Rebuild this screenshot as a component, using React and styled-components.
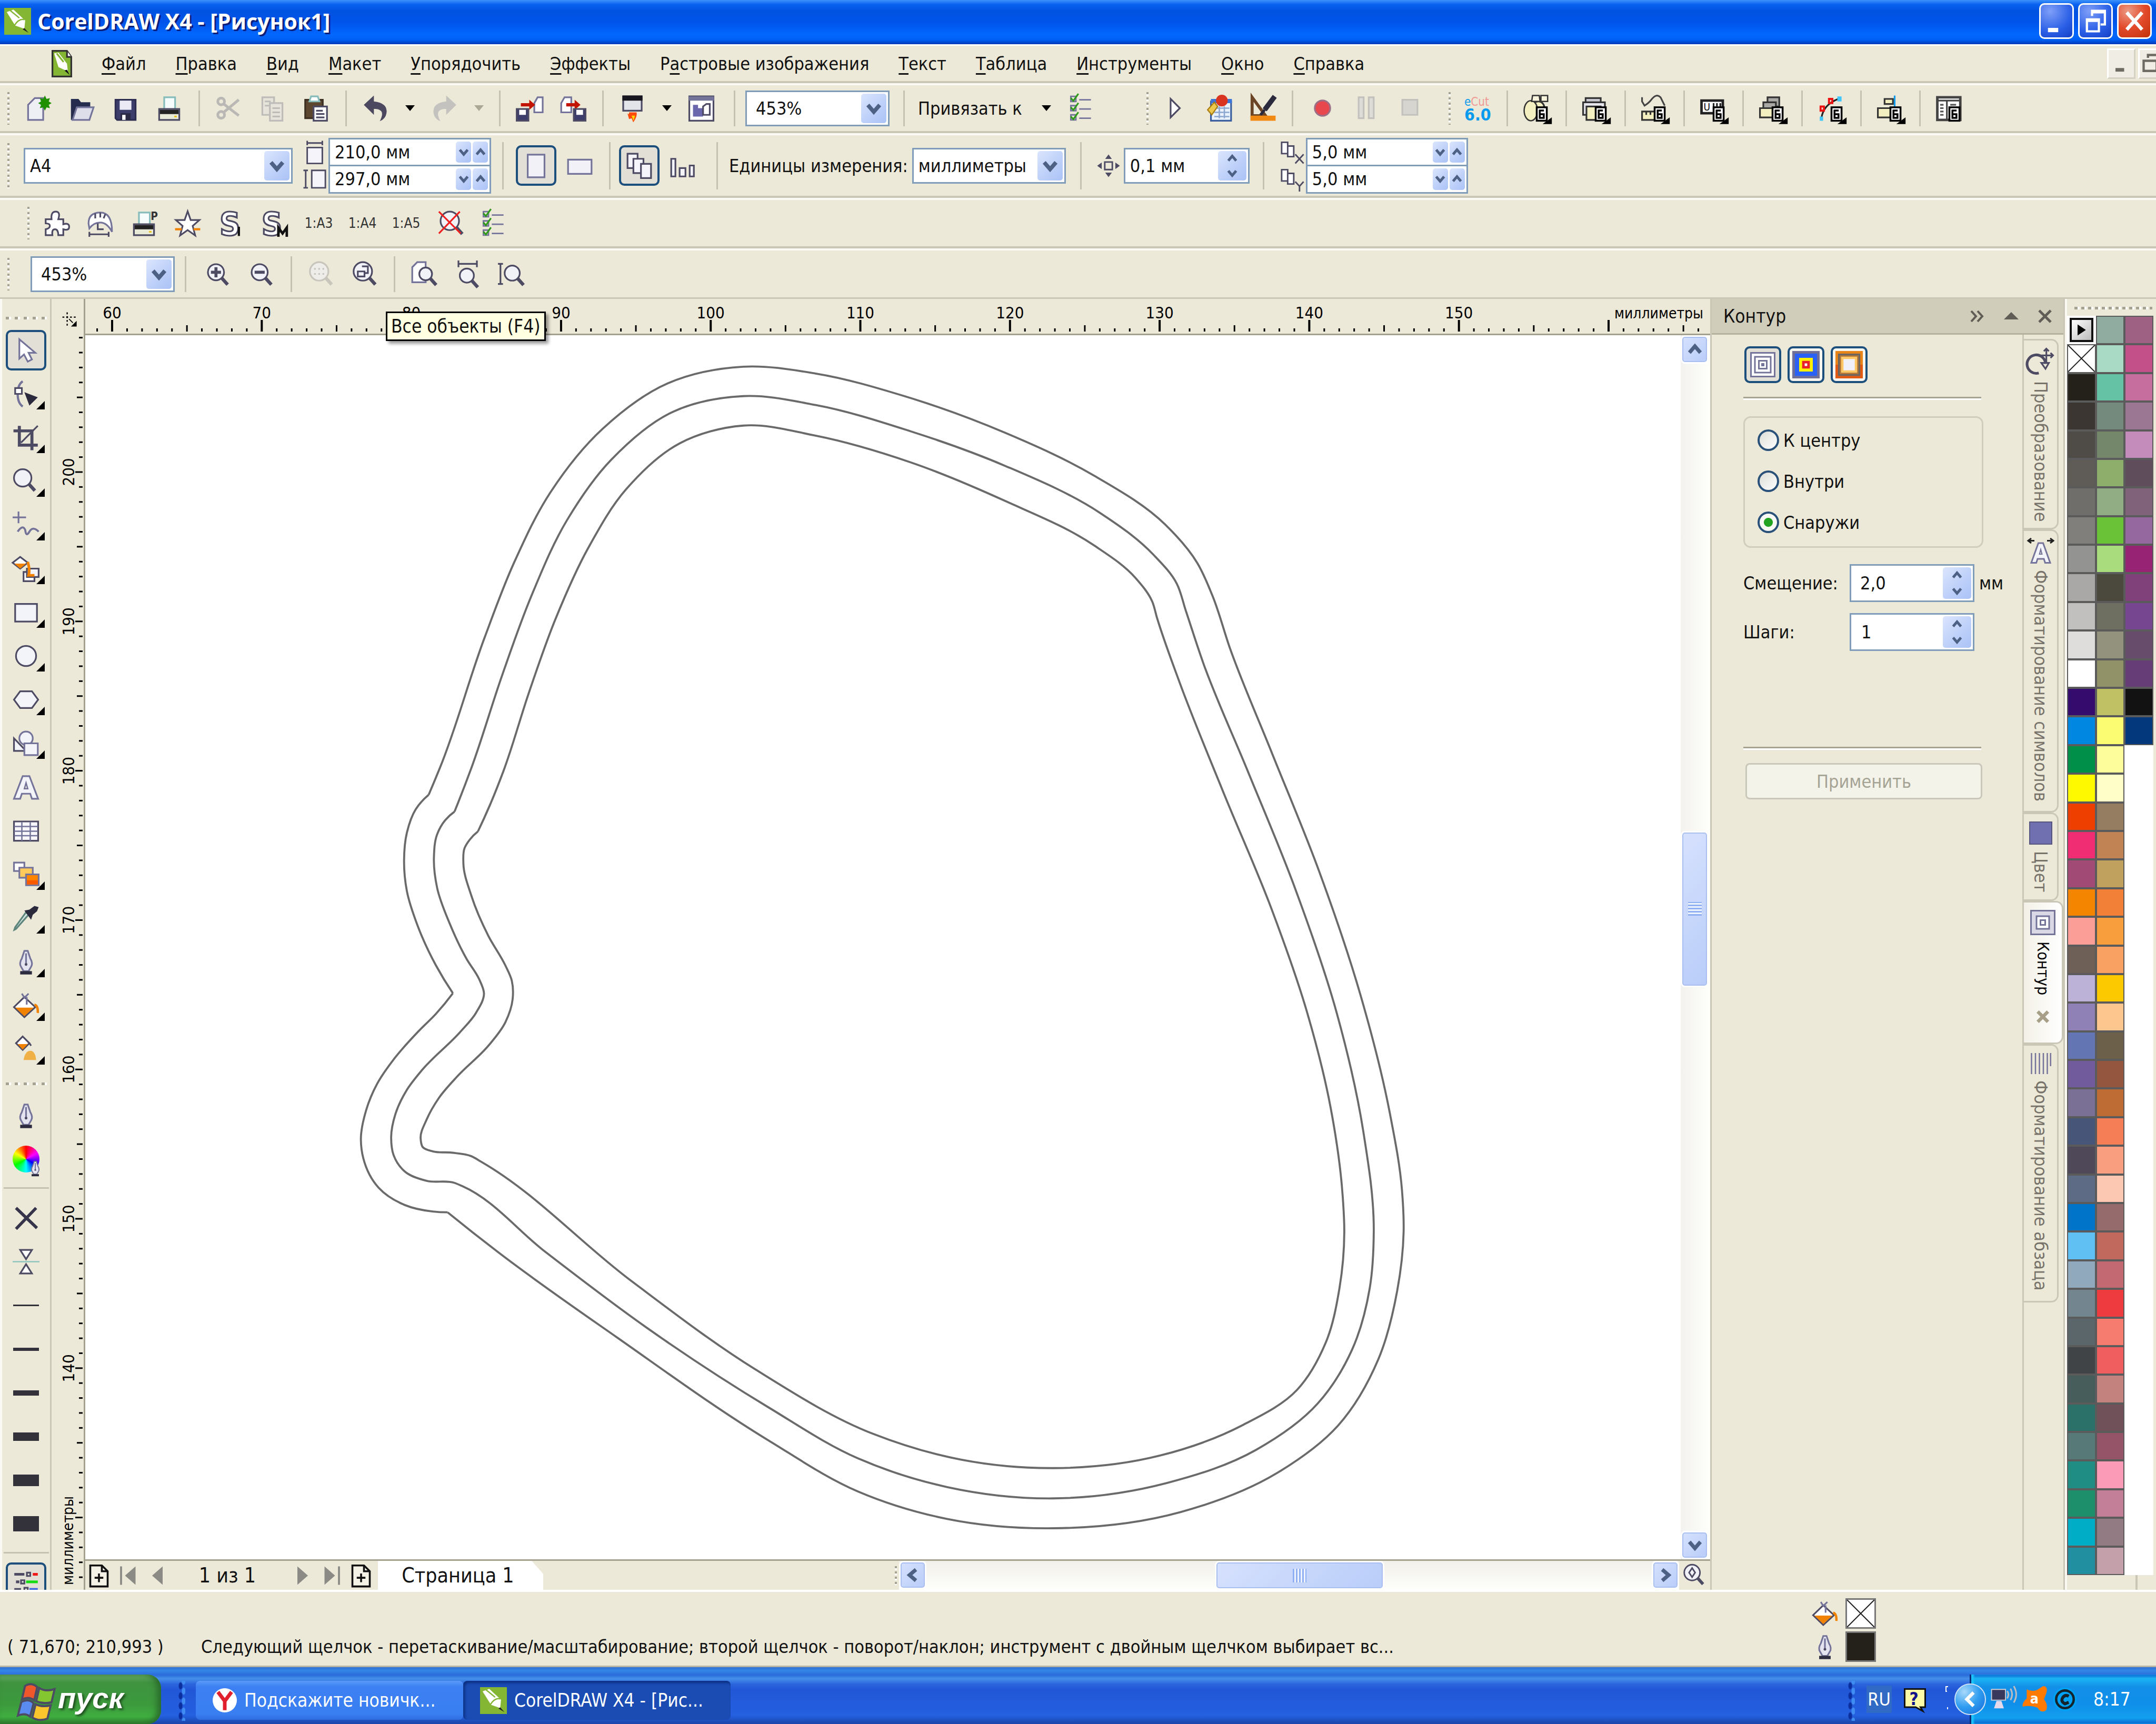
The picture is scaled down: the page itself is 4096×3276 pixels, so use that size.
import React, {useState} from 'react'
import styled, {createGlobalStyle, css} from 'styled-components'

const face = '#ece9d8'
const ink = '#4d4a63'
const steel = '#74739a'
const orange = '#f08200'

const menu = [
  ['', 'Ф', 'айл'], ['', 'П', 'равка'], ['', 'В', 'ид'], ['', 'М', 'акет'],
  ['', 'У', 'порядочить'], ['', 'Э', 'ффекты'], ['Р', 'а', 'стровые изображения'],
  ['', 'Т', 'екст'], ['', 'Т', 'аблица'], ['', 'И', 'нструменты'],
  ['', 'О', 'кно'], ['', 'С', 'правка'],
]

const paletteA = ['#24201a','#3b3632','#4f4b47','#5f5c58','#6f6e6b','#807f7b','#939392','#a9a8a7','#c2c0be','#dedddc','#ffffff','#350c6e','#0087e2','#008f48','#fff900','#ee3e00','#f02d72','#a04a75','#f38500','#fb9e98','#6f6057','#bcb1d7','#8f80b5','#6375b3','#725b9d','#7a7095','#465578','#4e4858','#5d6b84','#0074c8','#60bff3','#90a9bd','#73868f','#5b666b','#414446','#465d5c','#2b7169','#577a79','#1f8d83','#1d8f6a','#00adc6','#218fa0']
const paletteB = ['#90aba0','#a9dac6','#65c2a4','#738a7d','#74876b','#8eae6c','#90ad84','#6ac237','#a9dc7c','#4b493e','#6e6e61','#93937d','#919268','#c0c165','#fcfc72','#fdfe9b','#fffec8','#957d61','#c28354','#c0a15d','#f38037','#f99e3c','#f9a063','#fcc800','#fcc68e','#6d604a','#94563f','#bf6b34','#f57e56','#f99f80','#fdc8b1','#956c6b','#c2695e','#c36972','#ee3b40','#f77c70','#f15e60','#c3827e','#715159','#965469','#fc9bb8','#c37f97','#927b83','#c3a0aa']
const paletteC = ['#9e6083','#c4508a','#c66f9f','#9c7793','#c38cba','#5f4d5b','#80627a','#9569a0','#972374','#80417a','#774690','#674c6b','#663d76','#131213','#03397c']

// contour points, each array runs from one sharp corner to the next
const outer = [
  [[1062,1967],[1090,1900],[1200,1579],[1273,1393],[1364,1217],[1493,1060],[1655,947],[1841,906],[2021,923],[2241,979],[2491,1070],[2711,1176],[2887,1297],[2967,1393],[3004,1473],[3048,1605],[3151,1862],[3268,2155],[3371,2463],[3444,2757],[3474,2948],[3478,3050],[3462,3197],[3415,3367],[3316,3530],[3163,3649],[2925,3745],[2612,3785],[2347,3762],[2126,3694],[1905,3568],[1530,3313],[1233,3100],[1109,3002]],
  [[1109,3002],[1072,3000],[1003,2984],[938,2941],[900,2868],[894,2822],[907,2749],[934,2684],[976,2622],[1038,2552],[1080,2510],[1122,2459]],
  [[1122,2459],[1080,2390],[1034,2290],[1008,2206],[1001,2130],[1008,2061],[1030,2003],[1062,1967]],
]
const middle = [
  [[1126,2009],[1168,1900],[1244,1671],[1317,1473],[1405,1286],[1515,1136],[1669,1017],[1841,979],[2021,1001],[2256,1066],[2491,1152],[2725,1268],[2857,1371],[2916,1444],[2938,1510],[2982,1642],[3092,1909],[3209,2199],[3312,2507],[3378,2801],[3404,3050],[3394,3190],[3350,3343],[3265,3476],[3112,3591],[2891,3673],[2612,3711],[2347,3683],[2126,3612],[1905,3486],[1598,3285],[1351,3100],[1145,2937],[1126,2929],[1057,2924],[1003,2901],[975,2860],[969,2818],[980,2757],[1007,2700],[1045,2650],[1141,2554],[1179,2508],[1199,2459],[1187,2424],[1156,2374],[1114,2286],[1083,2198],[1075,2122],[1083,2065],[1103,2030],[1126,2009]],
]
const inner = [
  [[1184,2058],[1214,1992],[1247,1909],[1310,1715],[1376,1532],[1457,1356],[1552,1209],[1684,1096],[1841,1052],[2021,1077],[2256,1143],[2491,1239],[2711,1349],[2813,1429],[2855,1488],[2867,1529],[2923,1689],[3033,1965],[3151,2251],[3239,2507],[3297,2742],[3327,2962],[3331,3050],[3319,3190],[3285,3325],[3214,3442],[3078,3530],[2874,3605],[2612,3636],[2381,3615],[2163,3551],[1871,3391],[1564,3172],[1191,2876],[1168,2863],[1118,2854],[1072,2851],[1047,2840],[1042,2818],[1057,2772],[1087,2719],[1133,2665],[1210,2589],[1252,2531],[1270,2474],[1268,2428],[1252,2390],[1210,2317],[1168,2218],[1148,2137],[1151,2099],[1164,2078],[1184,2058]],
]

// spline with tangents weighted by chord length, so uneven points stay smooth
function smooth(pts){
  const n = pts.length
  const len = [], dir = []
  for(let i=0;i<n-1;i++){
    const dx = pts[i+1][0]-pts[i][0], dy = pts[i+1][1]-pts[i][1]
    len[i] = Math.hypot(dx,dy)
    dir[i] = [dx/len[i],dy/len[i]]
  }
  const tan = pts.map((p,i) => {
    if(i===0 || i===n-1) return null
    const w = len[i-1]+len[i]
    return [0,1].map(k => (dir[i-1][k]*len[i]+dir[i][k]*len[i-1])/w)
  })
  tan[0] = [0,1].map(k => 2*dir[0][k]-tan[1][k])
  tan[n-1] = [0,1].map(k => 2*dir[n-2][k]-tan[n-2][k])
  let d = `M${pts[0]}`
  for(let i=0;i<n-1;i++){
    const b = pts[i], c = pts[i+1], h = len[i]/3
    d += `C${b[0]+tan[i][0]*h} ${b[1]+tan[i][1]*h} ${c[0]-tan[i+1][0]*h} ${c[1]-tan[i+1][1]*h} ${c}`
  }
  return d
}

/* ---------- icons, all on a 16 unit grid ---------- */

const Magnifier = ({children, c=ink, x=7, y=7, r=4.8}) => <>
  <circle cx={x} cy={y} r={r} fill="#f1f1f8" stroke={c} />
  <path d={`M${x+r*.7} ${y+r*.7}L${x+r*.7+3.6} ${y+r*.7+4}`} stroke={c} strokeWidth="2" />
  {children}
</>
const Bucket = () => <>
  <path d="M7 3L13.5 9L7 15L.8 9Z" fill="#fff" stroke={ink} />
  <path d="M1.6 9.3H12.6L7 14.4Z" fill={orange} stroke="none" />
  <path d="M5.5 1L7 3.4L9.5 1M8.4 3V7.5" stroke={steel} />
  <path d="M13 7.6Q15.2 8 15 12.5" stroke={orange} strokeWidth="1.4" />
</>
const Nib = () => <>
  <path d="M7 1.5H9L10.500 6Q12.3 9 11 11L9.500 13.6H6.500L5 11Q3.700 9 5.500 6Z" fill="#e4e4f0" stroke={steel} />
  <path d="M8 3V9" stroke={steel} />
  <circle cx="8" cy="9.6" r=".8" fill={ink} stroke="none" />
  <path d="M4.500 14.600H11.500" stroke="#2d2b40" strokeWidth="2" />
</>
const Ticks = () => <>
  {[1,6.5,12].map(y => <g key={y}>
    <path d={`M2 ${y}h3v3h-3zM7 ${y+2}h7`} stroke={steel} strokeWidth=".9" />
    <path d={`M2 ${y+1}L3.500 ${y+2.6}L6.500 ${y-1.6}`} stroke="#2f9a1c" />
  </g>)}
</>
const Six = () => <>
  <rect x="8" y="7.5" width="6" height="8" fill="#fff" stroke="#000" strokeWidth="1.1" />
  <path d="M12.3 9.400H9.800V13.800H12.200V11.600H9.800" stroke="#000" strokeWidth="1.1" />
  <path d="M17 13.500V17.500H11.500Z" fill="#000" stroke="none" />
</>
const Printer = () => <>
  <path d="M5 9V1.500H11.500V9" fill="#f6fbfb" stroke="#86bdbb" />
  <path d="M2 8.500H14V15H2Z" fill="#e9e9d8" stroke={ink} />
  <path d="M2.500 9H13.500V11.500H2.500Z" fill="#222" stroke="none" />
  <path d="M11 13H12.500" stroke="#e8c420" />
</>
const Cup = () => <Icon16>
  <path d="M0 0H16V16H0Z" fill="#84b533" stroke="none" />
  <path d="M1.500 2.500L5.500 1L12.500 7.500L12 12.500L6.500 10.500Z" fill="#fff" stroke="none" />
  <path d="M3.500 1.500L9 6M6 10.500Q9 6 12 7" stroke="#84b533" strokeWidth=".8" />
  <path d="M12 12L14.500 14.800L11 12.800Z" fill="#222" stroke="none" />
</Icon16>

const glyphs = {
  new: <><path d="M2 15V6L6 2H11V15Z" fill="#eeeef5" stroke={steel} /><path d="M12 .500l1 2 2-.5-.7 2 1.700 1-1.700 1 .7 2-2-.5-1 2-1-2-2 .5.7-2-1.700-1 1.700-1-.7-2 2 .5z" fill="#1f9100" stroke="none" /></>,
  open: <><path d="M1.500 15V2.500H6L7.500 4.500H13V15Z" fill="#252c4d" stroke="none" /><path d="M2.500 15L5 7.500H15L12.500 15Z" fill="#dedeea" stroke={steel} /></>,
  save: <><path d="M2 3H14V15H3L2 14Z" fill="#3c3d6b" stroke="#2c2d50" /><path d="M4.500 3.500H11.500V9H4.500Z" fill="#eceaf5" stroke="none" /><path d="M5 11H11V15H5Z" fill="#2a2a45" stroke="none" /><path d="M6 12H8V15H6Z" fill="#fff" stroke="none" /></>,
  print: <Printer />,
  cut: <g stroke="#b9b8b4" strokeWidth="1.600"><circle cx="3.500" cy="4" r="2" /><circle cx="3.500" cy="12" r="2" /><path d="M5 5.500L14 12.500M5 10.500L14 3" /></g>,
  copy: <g stroke="#bdbcb8" fill="#e6e4da"><path d="M2 1.500H9V12H2Z" /><path d="M6.500 5H14V15.500H6.500Z" /><path d="M8 8H12.500M8 10.500H12.500M8 13H12.500M3.500 4H7M3.500 6.500H6" /></g>,
  paste: <><path d="M1.500 3H12V14H1.500Z" fill="#5c4630" stroke="#3c2f22" /><path d="M4 4L5 1H9L10 4Z" fill="#fff" stroke="#86bdbb" /><path d="M6.500 7H14.500V15.500H6.500Z" fill="#fff" stroke={ink} /><path d="M8 9.500H12M8 11.500H13M8 13.500H13" /></>,
  undo: <path d="M1 6L7 .5V4Q15.500 5 14.500 11Q14 14.500 10.500 15.800Q13 11 11 9.500Q9.500 8.300 7 8.500V12Z" fill="#4b4860" stroke="none" />,
  redo: <path d="M15 6L9 .5V4Q.5 5 1.500 11Q2 14.500 5.500 15.800Q3 11 5 9.500Q6.500 8.300 9 8.500V12Z" fill="#c3c2be" stroke="none" />,
  import: <><path d="M11 10.500V5L13 1.500H16V10.500Z" fill="#fff" stroke={steel} /><path d="M3 5H8V3L11.500 6L8 9V7H3Z" fill="#c21200" stroke="none" /><path d="M.5 8.500H7.500V15.500H.5Z" fill="#3c3d6b" /><path d="M2 9H6V12H2Z" fill="#fff" stroke="none" /></>,
  export: <><path d="M1 10.500V5L3 1.500H7V10.500Z" fill="#fff" stroke={steel} /><path d="M4 5H9V3L12.500 6L9 9V7H4Z" fill="#c21200" stroke="none" /><path d="M8.500 8.500H15.500V15.500H8.500Z" fill="#3c3d6b" /><path d="M10 9H14V12H10Z" fill="#fff" stroke="none" /></>,
  launch: <><path d="M2.500 1H13.500V9.500H2.500Z" fill="#e3e3ea" stroke={ink} /><path d="M2 .5H14V3.500H2Z" fill="#17161f" stroke="none" /><path d="M5 11Q6 12.500 6 10.500H10.500Q11 13 8.500 16.500L7.500 14L6 14.500Z" fill="#ff4a0a" stroke="none" /><path d="M7.500 12.500H9.500L8.700 15.500Z" fill="#ffd800" stroke="none" /></>,
  welcome: <><path d="M.8 1H15.200V15.500H.8Z" fill="#fff" stroke={ink} /><path d="M.5 1H15.500V3.500H.5Z" fill={steel} stroke="none" /><path d="M3 6H6V8H9V13H3Z" fill="#6a67ad" stroke="none" /><path d="M9 12V7L11 5.500H13V12Z" fill="#fff" stroke={ink} /></>,
  options: <Ticks />,
  play: <path d="M5 2.500V13.500L10.500 8Z" fill="#fff" stroke={ink} />,
  macro: <><path d="M3 4H15V15.500H3Z" fill="#e9f1fb" stroke="#3b5f9e" /><path d="M3 2.500H15.500V5H3Z" fill="#3d74d8" stroke="none" /><path d="M5 8H14M5 10.500H14M5 13H14M8 7V14M11 7V14" stroke="#8ba7d2" strokeWidth=".8" /><path d="M1 9L5 4.500L7 7L3.500 12Z" fill="#ecc84c" stroke="#a97c10" strokeWidth=".7" /><circle cx="9.500" cy="3.500" r="3.500" fill="#d93420" stroke="none" /></>,
  vba: <><path d="M1.500 12.500V1.500L9.500 12.500Z" fill="#ece9d8" stroke="#6b4526" strokeWidth="1.800" /><path d="M15 1L9 9" stroke="#2b2a3d" strokeWidth="3" /><path d="M9 9L6.500 12" stroke="#2b2a3d" strokeWidth="1.600" /><path d="M.5 12.500H15.500V15.500H.5Z" fill="#f08a14" stroke="none" /></>,
  rec: <circle cx="8" cy="8" r="4.600" fill="#e8474d" stroke="#9c6f86" />,
  pause: <path d="M3.500 1.500H6.500V14H3.500ZM9.500 1.500H12.500V14H9.500Z" fill="#dddcd6" stroke="#c2c1bd" />,
  stop: <path d="M3.500 3H12.500V12H3.500Z" fill="#d6d5d0" stroke="#c2c1bd" />,
  ecut: <><text x="0" y="6.500" fontSize="7" fill="#0a9bee" stroke="none">e<tspan fill="#f09a96">Cut</tspan></text><text x="0" y="15.500" fontSize="10" fontWeight="bold" fill="#0a9bee" stroke="none">6.0</text></>,
  cells: <><circle cx="9" cy="7.500" r="3.500" fill="#f4efc0" stroke="#333" /><ellipse cx="4.500" cy="9.500" rx="4" ry="6" fill="#f4efc0" stroke="#333" strokeWidth=".8" /><path d="M5.500 .500H9.500L10 4H5ZM10.500 .500H14.500V4H10.500Z" fill="#f7f3da" stroke="#333" strokeWidth=".8" /><Six /></>,
  stack: <><path d="M2 2H11V10H2Z" fill="#c8c8cf" stroke="#333" /><path d="M.5 4.500H13.500V12H.5Z" fill="#e6e6ec" stroke="#333" /><path d="M2.500 7H11V15H2.500Z" fill="#f4efc0" stroke="#333" /><Six /></>,
  curve: <><path d="M.5 1.500V4L2 6.500Q4.500 5 6 3Q9-1 11.500 1.500L14 6.500" stroke="#444" /><path d="M.5 10H11V15H.5Z" fill="#f4efc0" stroke="#333" /><path d="M3 10V12M5.500 10V12" stroke="#333" /><Six /></>,
  ruler: <><path d="M.8 3.500H13.500V11H.8Z" fill="#fff" stroke="#222" strokeWidth="1.500" /><text x="2" y="9.500" fontSize="6" fill="#000" stroke="none">U</text><path d="M8 5V9M10 5V7M12 5V9" stroke="#222" /><Six /></>,
  layers: <><path d="M5 1.500H12V7H5Z" fill="#a9a8a5" stroke="#333" /><path d="M2.500 4.500H10V9H2.500Z" fill="#a9a8a5" stroke="#333" /><path d="M.5 8H9V13.500H.5Z" fill="#f4efc0" stroke="#333" /><Six /></>,
  nodes: <><path d="M2 14Q3 6 12 2.500" stroke="#222" /><path d="M1 13H3V15.500H1ZM11.500 1H14V4H11.500Z" fill="#3ec7ff" stroke="none" /><path d="M1.500 7H3.500V9.500H1.500ZM6.500 2.500H8.500V5H6.500Z" stroke="#e11" strokeWidth="1.200" /><Six /></>,
  align: <><path d="M4.500 2.500H9.500V5.500H4.500ZM.5 8H8V13.500H.5Z" fill="#f4efc0" stroke="#333" /><path d="M10.500 .5V8" stroke="#129be8" /><Six /></>,
  panel: <><path d="M.8 1.500H14.500V15H.8Z" fill="#fff" stroke="#444" strokeWidth="1.500" /><path d="M1 3.500H15M6.500 4V15" stroke="#444" /><path d="M2.500 6H4.500M2.500 8H4.500M2.500 10H4.500M2.500 12H4.500M8.500 6H12" stroke="#555" /><rect x="8" y="7.500" width="6" height="8" fill="#fff" stroke="#000" strokeWidth="1.100" /><path d="M12.300 9.400H9.800V13.800H12.200V11.600H9.800" stroke="#000" strokeWidth="1.100" /></>,
  portrait: <path d="M3 1.500H13V15H3Z" fill="#f1f1f7" stroke={steel} />,
  landscape: <path d="M1 4.500H15V13H1Z" fill="#f1f1f7" stroke={steel} />,
  allPages: <g fill="#f4f4fa"><path d="M1 1H7V9.500H1Z" /><path d="M4.500 4H10.500V12.500H4.500Z" /><path d="M9 7H15V15.500H9Z" /></g>,
  thisPage: <g fill="#f4f4fa"><path d="M1 4H3.500V14.500H1Z" /><path d="M6 9.500H9.500V14.500H6Z" /><path d="M12 8H14.500V14.500H12Z" /></g>,
  pageW: <><path d="M3 5H13V15.500H3Z" fill="#f4f4fa" /><path d="M3 .5V3.500M13 .5V3.500M3 2H13" /></>,
  pageH: <><path d="M6 2H15V13.500H6Z" fill="#f4f4fa" /><path d="M.5 2H3.500M.5 13.500H3.500M2 2V13.500" /></>,
  nudge: <><path d="M5.500 5.500H10.500V10.500H5.500Z" /><path d="M8 .5L10.200 3.500H5.800ZM8 15.500L10.200 12.500H5.800ZM.5 8L3.500 5.800V10.200ZM15.500 8L12.500 5.800V10.200Z" fill={ink} stroke="none" /></>,
  dupX: <><path d="M1 1.500H5V9H1ZM5 4H9V11H5Z" fill="#fff" /><path d="M10 9.500L15.500 15.500M15.500 9.500L10 15.500" /></>,
  dupY: <><path d="M1 1.500H5V9H1ZM5 4H9V11H5Z" fill="#fff" /><path d="M10 9.500L12.800 12.500L15.500 9.500M12.800 12.500V16" /></>,
  puzzle: <path d="M1.500 5.500H5Q4.500 1 7.500 1T9 5.500H12V8.500Q15.500 7.500 15.500 10T12 11.500V15H9Q9 11.500 7 11.500T5.500 15H1.500V11.500Q4 11 4 9.500T1.500 8Z" fill="#fff" stroke={ink} />,
  gauge: <><path d="M1 8Q1 1.500 8 1.500Q15 1.500 15 13Q12 7.500 8 7.500Q4 7.500 1.500 11Z" fill="#fff" stroke={steel} /><path d="M5 2V5M8 1.500V4.500M11 2.500L10 5M6.500 8V11.500H10M1.500 14.500H13M1.500 13V16M13 13V16" stroke={ink} /></>,
  printP: <><Printer /><text x="12" y="6" fontSize="6.500" fontWeight="bold" fill="#333" stroke="none">P</text></>,
  star: <><path d="M8 .8L9.800 6H15L11 9.500L12.500 15.200L8 12L3.500 15.200L5 9.500L1 6H6.200Z" fill="#fff" stroke={ink} /><path d="M.5 11.500H4.500M11.500 11.500H15.500" stroke={orange} strokeWidth="1.300" /></>,
  sLine: <><text x="1" y="15" fontSize="19" fontWeight="bold" fill="#fff" stroke={ink}>S</text><path d="M12.500 10V15.500" stroke="#111" strokeWidth="1.300" /></>,
  sM: <><text x="0" y="15" fontSize="19" fontWeight="bold" fill="#fff" stroke={ink}>S</text><path d="M10 16V10.500L12.500 14L15 10.500V16" stroke="#111" strokeWidth="1.500" /></>,
  noZoom: <><Magnifier x={8} y={6.500} r={5.500} /><path d="M1.500 1L14.500 14M14 1L1.500 14" stroke="#f02020" /></>,
  zoomIn: <Magnifier><path d="M4 7H10M7 4V10" strokeWidth="1.800" /></Magnifier>,
  zoomOut: <Magnifier><path d="M4 7H10" strokeWidth="1.800" /></Magnifier>,
  zoomSel: <g opacity=".55"><Magnifier c="#aaa9a6" x={7} y={6.500} r={5.500}><path d="M4 5H11M4 8H11" stroke="#aaa9a6" strokeDasharray="1 1.500" /></Magnifier></g>,
  zoomAll: <Magnifier x={7} y={6.500} r={5.500}><path d="M4 6.500H8V9.500H4ZM6.500 3.500H10V7.500H8" /></Magnifier>,
  zoomPage: <><path d="M1 13V4L4 1H9V13Z" fill="#fff" stroke={steel} /><Magnifier x={9} y={8} r={3.800} /></>,
  zoomW: <><path d="M2.500 0V4M13.500 0V4M2.500 2H13.500" /><Magnifier x={7.500} y={9} r={4.200} /></>,
  zoomH: <><path d="M0 2H3M0 14H3M1.500 2V14" /><Magnifier x={8.500} y={7.500} r={4.500} /></>,
  pick: <path d="M4 1.500V13L6.800 10.500L9 14.800L11.500 13.500L9.500 9.500H13.500Z" fill="#fff" stroke={steel} />,
  shape: <><path d="M6 .5Q3 2.500 3 8T6 15.500" stroke={steel} strokeWidth="1.300" /><path d="M1.500 4.500H5.500V8H1.500Z" fill="#fff" /><path d="M7 7L15 10L10 15Z" fill="#2b2a3d" stroke="none" /></>,
  crop: <><path d="M4 1V12.500H15M.5 4H11.500V15.500" strokeWidth="1.800" /><path d="M5 11L15 1" /></>,
  zoom: <Magnifier x={6} y={6} r={5.200} />,
  freehand: <><path d="M3.500 0V7M0 3.500H8" stroke={steel} /><path d="M3 12Q6 7.500 7.500 11Q8 15.500 10 12T15.500 12" stroke={steel} strokeWidth="1.200" /></>,
  smart: <><path d="M4.500 1L9 4.500L4.500 8L0 4.500Z" fill="#fff" /><path d="M1 5H8L4.500 8Z" fill={orange} stroke="none" /><path d="M6.500 10H13V15.500H6.500Z" fill="#fff" /><path d="M8.500 8H15.500V13H8.500Z" fill="#f3f3fa" /><path d="M9 4Q10.500 9 9.500 12H13" stroke={orange} strokeWidth="1.600" /></>,
  rect: <path d="M1.500 3H14.500V13.500H1.500Z" fill="#f3f3fa" stroke={ink} />,
  ellipse: <circle cx="8" cy="8" r="6" fill="#f3f3fa" stroke={ink} />,
  polygon: <path d="M4.500 3H11.500L15.200 8L11.500 13H4.500L.8 8Z" fill="#f3f3fa" stroke={ink} />,
  shapes: <><path d="M.8 5V12.500H8Z" fill="#f3f3fa" /><circle cx="8" cy="5" r="4" fill="#f3f3fa" stroke={steel} /><path d="M7 8H15V15H7Z" fill="#f3f3fa" stroke={steel} /></>,
  text: <><path d="M.8 15L6 1.500H10L15.200 15H11.500L10.500 12H5.500L4.500 15Z" fill="#f3f3fa" stroke={steel} /><path d="M7 9L8 5.500L9 9Z" fill={face} stroke={steel} strokeWidth=".8" /></>,
  table: <><path d="M.8 2.500H15.200V14H.8Z" fill="#f6f6fb" /><path d="M1 5.500H15M1 8.300H15M1 11H15M5.500 3V14M10.500 3V14" stroke={steel} strokeWidth=".8" /></>,
  blend: <><path d="M.8 1H7V6H.8Z" fill="#fff" stroke={steel} /><path d="M4 4H12V10H4Z" fill="#ffc95c" stroke={steel} /><path d="M8 8H15.500V14.500H8Z" fill="#ff8400" stroke={steel} /><path d="M8.500 11.500H15V14H8.500Z" fill="#f95a00" stroke="none" /></>,
  dropper: <><path d="M9.500 6L2 14.500L1 15L1.500 13.500L8 4.500Z" fill="#d3e4e0" stroke="#5d857c" /><path d="M7 3.500L10 3L13 .8L15.500 1.500L14.500 4L12 6L11 9Z" fill="#2b2a3d" stroke="none" /></>,
  nib: <Nib />,
  bucket: <Bucket />,
  ifill: <><path d="M6 .5L10 4.500L6 8.500L2 4.500Z" fill="#fff" /><path d="M3 5H9L6 8.300Z" fill={orange} stroke="none" /><path d="M10 4.500L11 6" /><path d="M6.500 14.500Q7.500 9 10.500 9T14 14.500Z" fill="#efb146" stroke="none" /></>,
  none: <path d="M2 2L14.500 14M14 2L2 14.500" stroke="#36344a" strokeWidth="1.800" />,
  hair: <><path d="M4.500 1H11.500L8 6.500Z" fill="#fff" /><path d="M4.500 15H11.500L8 9.500Z" fill="#fff" /><path d="M0 8H16" stroke="#8fc4be" strokeWidth=".8" /></>,
  sliders: <><path d="M1 3H7M2 7.500H4M1 12H5" strokeWidth="1.600" /><path d="M8.500 2H10.500V4H8.500ZM5 6.500H7V8.500H5ZM7 11H9V13H7Z" /><path d="M12 3H15" stroke="#f01818" strokeWidth="1.600" /><path d="M8 7.500H15" stroke="#14dc14" strokeWidth="1.600" /><path d="M10 12H15" stroke="#3965e0" strokeWidth="1.600" /></>,
  addPage: <><path d="M2 1H10L14 5V15.500H2Z" stroke="#111" strokeWidth="1.300" fill="#f4f2e6" /><path d="M10 1V5H14M5 9.500H11M8 6.500V12.500" stroke="#111" strokeWidth="1.300" /></>,
}

const Icon16 = styled.svg.attrs({viewBox:'0 0 16 16', fill:'none', stroke:ink, 'aria-hidden':true})`
  width:${p => p.$size || 51}px;
  height:${p => p.$size || 51}px;
  flex:none;
  display:block;
  overflow:visible;
`

const Glyph = ({name, size}) => <Icon16 $size={size}>{glyphs[name]}</Icon16>

const Chevron = ({dir='down', size=26}) => {
  const turn = {down:0, up:180, left:90, right:270}[dir]
  return <Icon16 $size={size}><path d="M2 4.500L8 11.500L14 4.500" transform={`rotate(${turn} 8 8)`} stroke="#4d6185" strokeWidth="4" /></Icon16>
}

function Combo({label, value, width, pad}){
  return <Field style={{width}}>
    <ComboSelect aria-label={label} $pad={pad} defaultValue={value}><option>{value}</option></ComboSelect>
    <ComboCap><Chevron size={30} /></ComboCap>
  </Field>
}

function Spinner({id, label, value, width, pad}){
  const [val,setVal] = useState(value)
  return <Field style={{width}}>
    <FieldInput id={id} aria-label={label} $pad={pad} value={val} onChange={e => setVal(e.target.value)} />
    <SpinCol>
      <SpinHalf aria-label="Больше"><Chevron dir="up" size={20} /></SpinHalf>
      <SpinHalf aria-label="Меньше"><Chevron size={20} /></SpinHalf>
    </SpinCol>
  </Field>
}

function PairField({label, value}){
  const [val,setVal] = useState(value)
  return <PairRow>
    <FieldInput aria-label={label} $pad={6} value={val} onChange={e => setVal(e.target.value)} />
    <PairBtn aria-label="Меньше"><Chevron size={20} /></PairBtn>
    <PairBtn aria-label="Больше"><Chevron dir="up" size={20} /></PairBtn>
  </PairRow>
}

const Tool = ({name, label, on, fly}) => <ToolBtn aria-label={label || name} $on={on}>
  <Glyph name={name} />
  {fly && <Flyout viewBox="0 0 10 10" aria-hidden="true"><path d="M10 0V10H0Z" /></Flyout>}
</ToolBtn>

function HorizontalRuler(){
  const step = 284.3/10
  const ticks = []
  for(let mm=59;mm<167;mm++){
    const x = 51+(mm-60)*step
    const h = mm%10===0 ? 22 : mm%5===0 ? 12 : 6
    ticks.push(<path key={mm} d={`M${x} ${62-h}V62`} strokeWidth={mm%10===0 ? 4 : 3} />)
  }
  return <RulerSvg stroke="#000" role="img" aria-label="Горизонтальная линейка">
    {ticks}
    {[60,70,80,90,100,110,120,130,140,150].map(n =>
      <text key={n} x={51+(n-60)*step} y="37" textAnchor="middle">{n}</text>)}
    <text x="3074" y="37" textAnchor="end">миллиметры</text>
  </RulerSvg>
}

function VerticalRuler(){
  const step = 283.8/10
  const ticks = []
  for(let mm=209;mm>=126;mm--){
    const y = 329+(200-mm)*step
    const w = mm%10===0 ? 14 : mm%5===0 ? 11 : 7
    ticks.push(<path key={mm} d={`M${59-w} ${y}H59`} strokeWidth="3" />)
  }
  return <RulerSvg stroke="#000" role="img" aria-label="Вертикальная линейка">
    {ticks}
    {[200,190,180,170,160,150,140].map(n =>
      <text key={n} textAnchor="middle" transform={`translate(43 ${329+(200-n)*step}) rotate(-90)`}>{n}</text>)}
    <text transform="translate(41 2444) rotate(-90)">миллиметры</text>
  </RulerSvg>
}

const tools = [
  ['pick','Указатель'],['shape','Форма',1],['crop','Обрезка',1],['zoom','Масштаб',1],['freehand','Свободная форма',1],
  ['smart','Интеллектуальная заливка',1],['rect','Прямоугольник',1],['ellipse','Эллипс',1],['polygon','Многоугольник',1],
  ['shapes','Основные фигуры',1],['text','Текст'],['table','Таблица'],['blend','Перетекание',1],['dropper','Пипетка',1],
  ['nib','Абрис',1],['bucket','Заливка',1],['ifill','Интерактивная заливка',1],
]

function Toolbox(){
  return <ToolboxWrap>
    <DotRow />
    {tools.map(([name,label,fly],i) => <Tool key={name} name={name} label={label} on={i===0} fly={fly} />)}
    <DotRow />
    <Tool name="nib" label="Перо абриса" />
    <ToolBtn aria-label="Цвет абриса"><Wheel><Glyph name="nib" size={32} /></Wheel></ToolBtn>
    <HRule />
    <Tool name="none" label="Нет абриса" />
    <Tool name="hair" label="Сверхтонкий абрис" />
    {[3,6,10,16,22,29].map(h => <ToolBtn key={h} aria-label={`Абрис ${h}`}><Stroke $h={h} /></ToolBtn>)}
    <HRule />
    <Tool name="sliders" label="Цвет" on />
  </ToolboxWrap>
}

function Docker(){
  const [side,setSide] = useState('Снаружи')
  return <DockerWrap>
    <DockerTitle>
      <span>Контур</span>
      <TitleTools>
        <Icon16><path d="M2 3L6.500 8L2 13M8 3L12.500 8L8 13" stroke="#5f5d55" strokeWidth="2" /></Icon16>
        <Icon16><path d="M1 11L8 4L15 11Z" fill="#5f5d55" stroke="none" /></Icon16>
        <Icon16><path d="M2.500 2.500L13.500 13.500M13.500 2.500L2.500 13.500" stroke="#5f5d55" strokeWidth="2.400" /></Icon16>
      </TitleTools>
    </DockerTitle>
    <DockerBody>
      <Panel>
        <ModeRow>
          <ModeBtn aria-label="Шаги контура" $on><Icon16 $size={48}><path d="M.5 .5H15.500V15.500H.5ZM3 3H13V13H3ZM5.500 5.500H10.500V10.500H5.500Z" fill="#fff" stroke={steel} /><path d="M7 7H9V9H7Z" fill={steel} stroke="none" /></Icon16></ModeBtn>
          <ModeBtn aria-label="Цвет контура"><Icon16 $size={52}><path d="M0 0H16V16H0Z" fill="#6f6f97" stroke="none" /><path d="M1.500 1.500H14.500V14.500H1.500Z" fill="#2a62f5" stroke="none" /><path d="M4 4H12V12H4Z" fill="#fff200" stroke="none" /><path d="M6.500 6.500H9.500V9.500H6.500Z" fill="#fff" stroke="#e8202a" strokeWidth="1.500" /></Icon16></ModeBtn>
          <ModeBtn aria-label="Ускорение контура"><Icon16 $size={52}><path d="M0 0H16V8H0Z" fill="#e98518" stroke="none" /><path d="M0 8H16V16H0Z" fill="#e05a14" stroke="none" /><path d="M2 2H14V14H2Z" fill="#b0763a" stroke="#6d6660" /><path d="M4 4H12V12H4Z" fill="#f0f0fa" stroke="#ffc765" strokeWidth="1.400" /></Icon16></ModeBtn>
        </ModeRow>
        <Etched />
        <Group>
          {['К центру','Внутри','Снаружи'].map(t => <RadioLabel key={t}>
            <Radio type="radio" name="side" checked={side===t} onChange={() => setSide(t)} />{t}
          </RadioLabel>)}
        </Group>
        <FormGrid>
          <label htmlFor="offset">Смещение:</label>
          <Spinner id="offset" value="2,0" width={237} pad={14} />
          <span>мм</span>
          <label htmlFor="steps">Шаги:</label>
          <Spinner id="steps" value="1" width={237} pad={16} />
        </FormGrid>
        <Spacer $h={182} />
        <Etched />
        <Apply disabled>Применить</Apply>
      </Panel>
      <Tabs>
        <Tab $h={362}><Icon16><path d="M7 15A5.500 5.500 0 1 1 11 9.500" strokeWidth="1.600" /><path d="M8.500 9H13L11 12.500ZM11.500 .5V8.500M7.500 4.500H15.500M10 2L11.500 .5L13 2M14 3L15.500 4.500L14 6" /></Icon16>Преобразование</Tab>
        <Tab $h={538}><Icon16 $size={48}><path d="M2 15.500L6.500 3H9.500L14 15.500H10.800L10 13H6L5.200 15.500Z" fill="#f3f3fa" stroke={steel} /><path d="M7.200 10L8 7L8.800 10Z" fill={face} stroke={steel} strokeWidth=".7" /><path d="M0 1.500H4M12 1.500H16M2 0L0 1.500L2 3M14 0L16 1.500L14 3" stroke="#222" /></Icon16>Форматирование символов</Tab>
        <Tab $h={168}><Swatch />Цвет</Tab>
        <Tab $h={272} $active><Icon16 $size={48}><path d="M.5 .5H15.500V15.500H.5Z" fill="#d9d8e4" stroke={steel} /><path d="M4 4H12V12H4ZM6.500 6.500H9.500V9.500H6.500Z" fill="#fff" stroke={steel} /></Icon16>Контур<CloseBox aria-label="Закрыть"><Icon16 $size={26}><path d="M2 2L14 14M14 2L2 14" stroke="#a89f88" strokeWidth="4" /></Icon16></CloseBox></Tab>
        <Tab $h={491}><Icon16 $size={40}><path d="M1 0V16M4 0V16M7 0V16M10 0V16M13 0V16M15.500 0V10" stroke={steel} /></Icon16>Форматирование абзаца</Tab>
      </Tabs>
    </DockerBody>
  </DockerWrap>
}

function Palette(){
  return <PaletteWrap>
    <DotRow $wide />
    <Swatches>
      <ColorCol>
        <Chip aria-label="Палитра" $arrow><Icon16 $size={28}><path d="M4 2L13 8L4 14Z" fill="#000" stroke="none" /></Icon16></Chip>
        <Chip aria-label="Нет цвета" $c="#fff"><CrossSvg viewBox="0 0 50 50" preserveAspectRatio="none"><path d="M0 0L50 50M50 0L0 50" /></CrossSvg></Chip>
        {paletteA.map(c => <Chip key={c} aria-label={c} $c={c} />)}
      </ColorCol>
      <ColorCol>{paletteB.map(c => <Chip key={c} aria-label={c} $c={c} />)}</ColorCol>
      <ColorCol>{paletteC.map(c => <Chip key={c} aria-label={c} $c={c} />)}</ColorCol>
    </Swatches>
    <PaletteFoot />
  </PaletteWrap>
}

export default function App(){
  return <Root>
    <Global />
    <TitleBar>
      <Cup />
      <TitleText>CorelDRAW X4 - [Рисунок1]</TitleText>
      <WinBtn aria-label="Свернуть"><Icon16 $size={52}><path d="M3 12H9V14.500H3Z" fill="#fff" stroke="none" /></Icon16></WinBtn>
      <WinBtn aria-label="Восстановить"><Icon16 $size={52}><path d="M6 5V2H13.500V10H11M3 7H10V14H3Z" stroke="#fff" strokeWidth="1.300" /><path d="M6 2.500H14M3 7.500H10" stroke="#fff" strokeWidth="2" /></Icon16></WinBtn>
      <WinBtn aria-label="Закрыть" $close><Icon16 $size={52}><path d="M3.500 3L12.500 13M12.500 3L3.500 13" stroke="#fff" strokeWidth="2" /></Icon16></WinBtn>
    </TitleBar>

    <MenuBar>
      <MenuIcon viewBox="0 0 12 16" fill="none"><path d="M.5 .5H9L11.500 4V15.500H.5Z" fill="#84b533" stroke="#333" /><path d="M1.500 2L4 1.500L9 8L9.500 12.500L4 10Z" fill="#fff" /><path d="M3 2L7 7" stroke="#84b533" /><path d="M9 .5V4H11.500" fill="#fff" stroke="#333" /><path d="M9 11.500L10.500 14.500L7.500 12Z" fill="#111" /></MenuIcon>
      {menu.map(([a,u,b]) => <MenuItem key={u+b}>{a}<u>{u}</u>{b}</MenuItem>)}
      <MdiBtns>
        <MdiBtn aria-label="Свернуть документ"><Icon16 $size={44}><path d="M4 11H10V13.500H4Z" fill="#6e6c62" stroke="none" /></Icon16></MdiBtn>
        <MdiBtn aria-label="Восстановить документ"><Icon16 $size={44}><path d="M5 4V2H14V9H12M2 6H11V13H2Z" stroke="#6e6c62" strokeWidth="1.600" /></Icon16></MdiBtn>
      </MdiBtns>
    </MenuBar>

    <Bar $h={95}>
      <Grip $w={31} />
      {['new','open','save','print'].map(n => <Tool key={n} name={n} />)}
      <Sep />
      {['cut','copy','paste'].map(n => <Tool key={n} name={n} />)}
      <Sep />
      <Tool name="undo" /><Caret aria-label="Список отмены" />
      <Tool name="redo" /><Caret aria-label="Список возврата" $off />
      <Sep />
      <Tool name="import" /><Tool name="export" />
      <Sep />
      <Tool name="launch" /><Caret aria-label="Приложения" />
      <Tool name="welcome" />
      <Sep $w={42} />
      <Combo label="Масштаб" value="453%" width={274} pad={14} />
      <Sep $w={54} />
      <SnapBtn>Привязать к</SnapBtn>
      <Caret aria-label="Привязки" />
      <Tool name="options" />
      <Grip $w={97} $end />
      {['play','macro','vba'].map(n => <Tool key={n} name={n} />)}
      <Sep />
      {['rec','pause','stop'].map(n => <Tool key={n} name={n} />)}
      <Grip $w={46} $end />
      <Tool name="ecut" />
      {['cells','stack','curve','ruler','layers','nodes','align','panel'].map(n =>
        <React.Fragment key={n}><Sep $w={29} /><Tool name={n} /></React.Fragment>)}
    </Bar>

    <Bar $h={123}>
      <Grip $w={45} $tall />
      <Combo label="Формат" value="A4" width={511} pad={6} />
      <PairIcons><Glyph name="pageW" size={46} /><Glyph name="pageH" size={46} /></PairIcons>
      <Pair $w={309}><PairField label="Ширина" value="210,0 мм" /><PairField label="Высота" value="297,0 мм" /></Pair>
      <Sep $tall $w={44} />
      <Tool name="portrait" on />
      <Tool name="landscape" />
      <Sep $tall />
      <Tool name="allPages" on />
      <Tool name="thisPage" />
      <Sep $tall $w={46} />
      <Caption>Единицы измерения:</Caption>
      <Combo label="Единицы измерения" value="миллиметры" width={292} pad={6} />
      <Sep $tall $w={58} />
      <Glyph name="nudge" size={46} />
      <Spinner label="Шаг сдвига" value="0,1 мм" width={239} pad={6} />
      <Sep $tall $w={54} />
      <PairIcons><Glyph name="dupX" size={46} /><Glyph name="dupY" size={46} /></PairIcons>
      <Pair $w={308}><PairField label="По X" value="5,0 мм" /><PairField label="По Y" value="5,0 мм" /></Pair>
    </Bar>

    <Bar $h={96}>
      <Grip $w={66} $end />
      {['puzzle','gauge','printP','star','sLine','sM'].map(n => <Tool key={n} name={n} />)}
      {['1:A3','1:A4','1:A5'].map(t => <ScaleBtn key={t}>{t}</ScaleBtn>)}
      <Tool name="noZoom" /><Tool name="options" />
    </Bar>

    <Bar $h={96} $last>
      <Grip $w={58} />
      <Combo label="Масштаб просмотра" value="453%" width={274} pad={14} />
      <Sep $w={40} />
      <Tool name="zoomIn" /><Tool name="zoomOut" />
      <Sep />
      <Tool name="zoomSel" /><Tool name="zoomAll" label="Все объекты" />
      <Sep />
      <Tool name="zoomPage" /><Tool name="zoomW" /><Tool name="zoomH" />
    </Bar>

    <Main>
      <Toolbox />
      <Workspace>
        <RulerColumn>
          <Corner viewBox="0 0 20 20"><path d="M2 7H18M7 2V18" stroke="#000" strokeWidth="1.300" strokeDasharray="2 2" fill="none" /><path d="M9 9L13 13" stroke="#000" /><path d="M17 11V17H11Z" /></Corner>
          <VerticalRuler />
        </RulerColumn>
        <View>
          <RulerTop><HorizontalRuler /></RulerTop>
          <CanvasRow>
            <Drawing viewBox="211 828 3945 3034" preserveAspectRatio="xMinYMin meet">
              {[...outer, ...middle, ...inner].map((seg,i) => <path key={i} d={smooth(seg)} />)}
            </Drawing>
            <VScroll>
              <ScrollBtn aria-label="Вверх"><Chevron dir="up" size={28} /></ScrollBtn>
              <Gap $f={893} /><Thumb $f={292} $v><i /></Thumb><Gap $f={1039} />
              <ScrollBtn aria-label="Вниз"><Chevron size={28} /></ScrollBtn>
            </VScroll>
          </CanvasRow>
          <PageBar>
            <PageNav>
              <Glyph name="addPage" size={44} />
              <Icon16 $size={40}><path d="M2 1V15" stroke="#8b8a84" strokeWidth="1.500" /><path d="M13 1V15L5 8Z" fill="#8b8a84" stroke="none" /></Icon16>
              <Icon16 $size={40}><path d="M12 1V15L4 8Z" fill="#8b8a84" stroke="none" /></Icon16>
              <PageCount>1 из 1</PageCount>
              <Icon16 $size={40}><path d="M4 1V15L12 8Z" fill="#8b8a84" stroke="none" /></Icon16>
              <Icon16 $size={40}><path d="M14 1V15" stroke="#8b8a84" strokeWidth="1.500" /><path d="M3 1V15L11 8Z" fill="#8b8a84" stroke="none" /></Icon16>
              <Glyph name="addPage" size={44} />
            </PageNav>
            <PageTab>Страница 1</PageTab>
            <Grip $w={22} $push />
            <HScroll>
              <ScrollBtn aria-label="Влево" $h><Chevron dir="left" size={28} /></ScrollBtn>
              <Gap $f={550} /><Thumb $f={318}><i /></Thumb><Gap $f={510} />
              <ScrollBtn aria-label="Вправо" $h><Chevron dir="right" size={28} /></ScrollBtn>
            </HScroll>
            <NavBtn aria-label="Навигатор"><Icon16 $size={46}><Magnifier x={6.500} y={6} r={5.200}><path d="M6.500 3L8.500 6L6.500 9L4.500 6Z" /></Magnifier></Icon16></NavBtn>
          </PageBar>
        </View>
        <Tip role="tooltip">Все объекты (F4)</Tip>
      </Workspace>
      <Docker />
      <Palette />
    </Main>

    <Status>
      <Coords>( 71,670; 210,993 )</Coords>
      <Hint>Следующий щелчок - перетаскивание/масштабирование; второй щелчок - поворот/наклон; инструмент с двойным щелчком выбирает вс...</Hint>
      <FillInfo>
        <Glyph name="bucket" size={50} /><Box><CrossSvg viewBox="0 0 50 50"><path d="M0 0L50 50M50 0L0 50" /></CrossSvg></Box>
        <Glyph name="nib" size={50} /><Box $dark />
      </FillInfo>
    </Status>

    <Taskbar>
      <Start>
        <Icon16 $size={62} viewBox="0 0 20 20" stroke="none"><path d="M4 2Q7 0 10 2.500L8.500 9Q6 7 2.500 8.500Z" fill="#f0572a" /><path d="M11 3Q14 5 18.500 3.500L17 10Q13 11 9.500 9.500Z" fill="#84c62f" /><path d="M2.200 9.800Q6 8 8.200 10.500L6.500 17Q4 15 .5 16.500Z" fill="#5a8bf0" /><path d="M9.200 11Q12.500 12.500 16.600 11.500L15 18Q11 19.500 7.600 17.500Z" fill="#fbc52d" /></Icon16>
        пуск
      </Start>
      <TrayDots $m={32} />
      <Task>
        <Icon16 $size={46}><circle cx="8" cy="8" r="8" fill="#fff" stroke="none" /><path d="M3.500 2.500L8 8.500L12.500 2.500M8 8V14.500" stroke="#e0202c" strokeWidth="2.400" /></Icon16>
        Подскажите новичк...
      </Task>
      <Task $on><Cup />CorelDRAW X4 - [Рис...</Task>
      <Lang>
        <TrayDots $m={0} />
        <LangCode>RU</LangCode>
        <Icon16 $size={48}><path d="M1.500 1.500H14.500V13H11.500L13 15.500L8.500 13H1.500Z" fill="#fdfba8" stroke="#111" /><text x="4.500" y="11.500" fontSize="11" fontWeight="bold" fill="#12128a" stroke="none">?</text></Icon16>
        <LangDots viewBox="0 0 6 50"><path d="M5 1H1V10H3M4 40V44" stroke="#fff" strokeWidth="2" fill="none" /></LangDots>
      </Lang>
      <Tray>
        <TrayToggle aria-label="Показать значки"><Icon16 $size={34}><path d="M11 2L5 8L11 14" stroke="#fff" strokeWidth="3" /></Icon16></TrayToggle>
        <Icon16 $size={50}><path d="M.5 2H9V8.500H.5Z" fill="#39395e" stroke="#cfcfd8" strokeWidth=".6" /><path d="M3.500 9H6.500L8 13.500H2Z" fill="#e3d9ea" stroke="none" /><path d="M10 3Q11.500 5 10 7.500M12 1.500Q14 5 12 8.500M14 0Q17 5 14 10" stroke="#b9bcc2" /></Icon16>
        <Icon16 $size={50}><path d="M3 2Q6 3.500 9 2.500L13 0Q16 0 15 4L13.500 8Q16 11 15 14.500Q12 17 9.500 13Q5 11.500 .5 12.500Q0 10 3 7.500Z" fill="#ff7a00" stroke="none" /><text x="5" y="10.500" fontSize="8.500" fontWeight="bold" fill="#fff" stroke="none">a</text></Icon16>
        <Icon16 $size={46}><circle cx="8" cy="8" r="7.800" fill="#00a2f5" stroke="none" /><circle cx="8" cy="8" r="5.800" stroke="#15242c" strokeWidth="1.600" /><path d="M10.500 6Q8 4.500 6.500 7T8 11L10.500 10" stroke="#15242c" strokeWidth="2" /></Icon16>
        <Clock>8:17</Clock>
      </Tray>
    </Taskbar>
  </Root>
}

/* ---------- styles ---------- */

const Global = createGlobalStyle`
  *{box-sizing:border-box;}
  body{margin:0;}
  button,input,select{font:inherit;color:inherit;}
  button{border:0;padding:0;background:none;}
`
const Root = styled.div`
  width:100%;
  height:100vh;
  display:flex;
  flex-direction:column;
  overflow:hidden;
  background:${face};
  color:#111;
  font-family:"DejaVu Sans Condensed","DejaVu Sans",sans-serif;
  font-size:34px;
  line-height:40px;
`
const TitleBar = styled.header`
  flex:none;
  height:84px;
  display:flex;
  align-items:center;
  gap:8px;
  padding:0 8px 4px;
  background:linear-gradient(#3c92fa,#0a62f0 10%,#0052e0 25%,#0054ea 50%,#0267ff 78%,#0060f5 90%,#0038b4);
`
const TitleText = styled.h1`
  flex:1;
  margin:0 0 0 4px;
  color:#fff;
  font-size:41px;
  line-height:50px;
  font-weight:bold;
  font-family:"Open Sans","DejaVu Sans Condensed",sans-serif;
  text-shadow:3px 3px 0 #0a1f7a;
`
const WinBtn = styled.button`
  width:66px;
  height:68px;
  display:flex;
  align-items:center;
  justify-content:center;
  border:3px solid #fff;
  border-radius:10px;
  background:${p => p.$close ? 'radial-gradient(circle at 30% 20%,#ec9a84,#e2492a 50%,#c2320a)' : 'radial-gradient(circle at 30% 20%,#7f9ff8,#2a5fe6 60%,#1440c4)'};
`
const MenuBar = styled.nav`
  flex:none;
  height:74px;
  display:flex;
  align-items:center;
  gap:56px;
  padding-left:98px;
  border-top:3px solid #fff;
  border-bottom:4px solid #cbc7b6;
`
const MenuIcon = styled.svg`
  width:39px;
  height:52px;
`
const MenuItem = styled.button`
  white-space:nowrap;
  font-size:34px;
  u{text-underline-offset:6px;text-decoration-thickness:3px;}
`
const MdiBtns = styled.div`
  display:flex;
  gap:5px;
  margin-left:auto;
  margin-right:-20px;
`
const MdiBtn = styled.button`
  width:54px;
  height:58px;
  display:flex;
  align-items:center;
  justify-content:center;
  background:#f0eee4;
  border:3px solid #fff;
  border-right-color:#d5d2c4;
  border-bottom-color:#d5d2c4;
`
const Bar = styled.div`
  flex:none;
  height:${p => p.$h}px;
  display:flex;
  align-items:center;
  border-top:4px solid #faf9f4;
  border-bottom:${p => p.$last ? 3 : 4}px solid #cbc7b6;
`
const Grip = styled.span`
  flex:none;
  width:${p => p.$w}px;
  height:${p => p.$tall ? 86 : 62}px;
  ${p => p.$push && css`margin-left:auto;height:36px;align-self:center;`}
  background:repeating-linear-gradient(#a5a293 0 4px,#fff 4px 7px,transparent 7px 10px) no-repeat;
  background-size:4px 100%;
  background-position:${p => p.$end ? 'calc(100% - 10px)' : '14px'} 0;
`
const Sep = styled.span`
  flex:none;
  width:${p => p.$w || 30}px;
  height:${p => p.$tall ? 90 : 68}px;
  background:linear-gradient(#c5c2b0,#c5c2b0) center/3px 100% no-repeat;
`
const pressed = css`
  border:4px solid #1d4f7d;
  border-radius:10px;
  background:#e1dfd6;
`
const ToolBtn = styled.button`
  position:relative;
  flex:none;
  width:83px;
  height:83px;
  display:flex;
  align-items:center;
  justify-content:center;
  ${p => p.$on && css`
    ${pressed}
    width:77px;
    height:77px;
    margin:3px;
  `}
`
const Flyout = styled.svg`
  position:absolute;
  right:4px;
  bottom:12px;
  width:20px;
  height:16px;
`
const Caret = styled.button`
  flex:none;
  width:48px;
  height:83px;
  display:flex;
  align-items:center;
  justify-content:center;
  &::after{
    content:'';
    border:9px solid transparent;
    border-top:11px solid ${p => p.$off ? '#aaa895' : '#000'};
    border-bottom:0;
  }
`
const SnapBtn = styled.button`
  margin-right:22px;
  white-space:nowrap;
`
const ScaleBtn = styled.button`
  width:83px;
  height:83px;
  font-size:26px;
  color:#333;
`
const Caption = styled.span`
  margin-right:8px;
  white-space:nowrap;
`
const Field = styled.div`
  flex:none;
  height:68px;
  display:flex;
  align-items:stretch;
  padding:3px;
  border:3px solid #7f9db9;
  background:#fff;
  ${Icon16} + &{margin-left:6px;}
`
const fieldText = css`
  flex:1;
  min-width:0;
  border:0;
  outline:0;
  margin:0;
  padding:0 0 0 ${p => p.$pad}px;
  background:transparent;
  appearance:none;
`
const ComboSelect = styled.select`${fieldText}`
const FieldInput = styled.input`${fieldText}`
const capFill = css`
  background:linear-gradient(135deg,#dbe5fd,#bccff9 60%,#aac2f6);
  border-radius:5px;
`
const ComboCap = styled.span`
  width:48px;
  display:flex;
  align-items:center;
  justify-content:center;
  pointer-events:none;
  ${capFill}
`
const SpinCol = styled.div`
  width:54px;
  display:flex;
  flex-direction:column;
  ${capFill}
`
const SpinHalf = styled.button`
  flex:1;
  display:flex;
  align-items:center;
  justify-content:center;
`
const Pair = styled.div`
  flex:none;
  width:${p => p.$w}px;
  height:106px;
  display:flex;
  flex-direction:column;
  border:3px solid #7f9db9;
  background:#fff;
`
const PairRow = styled.div`
  flex:1;
  min-height:0;
  display:flex;
  gap:3px;
  padding:4px 3px;
  & + &{border-top:3px solid #7f9db9;}
`
const PairBtn = styled.button`
  width:29px;
  display:flex;
  align-items:center;
  justify-content:center;
  ${capFill}
`
const PairIcons = styled.div`
  display:flex;
  flex-direction:column;
  gap:6px;
  padding:0 3px 0 19px;
  ${Sep} + &{padding-left:4px;}
`
const Main = styled.main`
  flex:1;
  min-height:0;
  display:flex;
  border-bottom:4px solid #fff;
`
const ToolboxWrap = styled.aside`
  flex:none;
  width:98px;
  display:flex;
  flex-direction:column;
  align-items:center;
  overflow:hidden;
  padding-top:34px;
  border-left:4px solid #faf9f4;
  border-right:3px solid #cbc7b6;
  & > button{flex:none;}
`
const DotRow = styled.span`
  flex:none;
  width:${p => p.$wide ? 148 : 78}px;
  height:5px;
  margin:${p => p.$wide ? '15px 6px 12px 14px' : '0 0 17px'};
  button + &{margin:22px 0 16px;}
  background:repeating-linear-gradient(90deg,#a5a293 0 6px,#fff 6px 10px,transparent 10px ${p => p.$wide ? 13 : 17}px);
`
const HRule = styled.span`
  flex:none;
  width:86px;
  height:3px;
  margin:12px 0 14px;
  background:#c5c2b0;
`
const Stroke = styled.span`
  width:49px;
  height:${p => p.$h}px;
  background:#33313a;
`
const Wheel = styled.span`
  width:51px;
  height:51px;
  display:flex;
  align-items:flex-end;
  justify-content:flex-end;
  border-radius:50%;
  background:conic-gradient(red,magenta,blue,cyan,lime,yellow,red);
  svg{margin:0 -8px -8px 0;}
`
const Workspace = styled.section`
  position:relative;
  flex:1;
  min-width:0;
  display:flex;
  border-right:3px solid #cbc7b6;
`
const RulerColumn = styled.div`
  flex:none;
  width:64px;
  display:flex;
  flex-direction:column;
  border-right:3px solid #a5a18f;
`
const Corner = styled.svg`
  position:absolute;
  left:14px;
  top:22px;
  width:42px;
  height:36px;
`
const RulerSvg = styled.svg`
  display:block;
  width:100%;
  height:100%;
  text{
    stroke:none;
    fill:#000;
    font-size:31px;
    &:last-child{font-size:28px;}
  }
`
const View = styled.div`
  flex:1;
  min-width:0;
  display:flex;
  flex-direction:column;
`
const RulerTop = styled.div`
  flex:none;
  height:69px;
  border-bottom:3px solid #a5a18f;
`
const CanvasRow = styled.div`
  flex:1;
  min-height:0;
  display:flex;
  background:#fff;
`
const Drawing = styled.svg`
  flex:1;
  min-width:0;
  height:100%;
  fill:none;
  stroke:#6a6a6a;
  stroke-width:5;
`
const VScroll = styled.div`
  flex:none;
  width:56px;
  display:flex;
  flex-direction:column;
  padding-right:3px;
  background:linear-gradient(90deg,#f3f2ee,#fefefb);
`
const HScroll = styled.div`
  flex:none;
  width:1482px;
  display:flex;
  background:linear-gradient(#f1f0ea,#fefefb);
`
const scrollPart = css`
  display:flex;
  align-items:center;
  justify-content:center;
  border:3px solid #fff;
  border-radius:8px;
  background:linear-gradient(135deg,#d6e1fd,#b9cdf9);
  box-shadow:inset 0 0 0 2px #a9bff0;
`
const ScrollBtn = styled.button`
  flex:none;
  width:${p => p.$h ? 52 : 53}px;
  height:54px;
  ${scrollPart}
`
const Gap = styled.span`flex:${p => p.$f} 0 0;`
const Thumb = styled.span`
  flex:${p => p.$f} 0 0;
  ${scrollPart}
  i{
    width:26px;
    height:26px;
    background:repeating-linear-gradient(${p => p.$v ? '0deg' : '90deg'},#8fb0f2 0 3px,#eef3fe 3px 6px);
  }
`
const PageBar = styled.div`
  flex:none;
  height:58px;
  display:flex;
  align-items:stretch;
  border-top:3px solid #a5a18f;
  font-size:39px;
`
const PageNav = styled.div`
  display:flex;
  align-items:center;
  justify-content:space-between;
  width:556px;
  padding:0 10px 0 4px;
`
const PageCount = styled.span`padding:0 54px 0 44px;`
const PageTab = styled.button`
  width:314px;
  padding-right:10px;
  background:#fff;
  clip-path:polygon(0 0,93% 0,100% 45%,100% 100%,0 100%);
`
const NavBtn = styled.button`
  width:59px;
  padding-left:6px;
`
const Tip = styled.div`
  position:absolute;
  left:635px;
  top:24px;
  padding:5px 7px;
  border:3px solid #000;
  background:#ffffe1;
  box-shadow:5px 5px 6px rgba(0,0,0,.4);
  white-space:nowrap;
  font-size:35px;
`
const DockerWrap = styled.aside`
  flex:none;
  width:671px;
  display:flex;
  flex-direction:column;
  border-right:3px solid #cbc7b6;
`
const DockerTitle = styled.div`
  flex:none;
  height:68px;
  display:flex;
  align-items:center;
  justify-content:space-between;
  padding:0 14px 0 22px;
  background:#d1cdbb;
  border-bottom:3px solid #b5b19f;
  font-size:35px;
`
const TitleTools = styled.span`
  display:flex;
  gap:22px;
  ${Icon16}{width:42px;height:32px;}
`
const DockerBody = styled.div`
  flex:1;
  min-height:0;
  display:flex;
`
const Panel = styled.div`
  flex:1;
  min-width:0;
  display:flex;
  flex-direction:column;
  padding:22px 78px 0 60px;
`
const ModeRow = styled.div`
  display:flex;
  gap:12px;
  padding-left:2px;
  margin-bottom:26px;
`
const ModeBtn = styled.button`
  width:70px;
  height:70px;
  display:flex;
  align-items:center;
  justify-content:center;
  ${pressed}
  background:${p => p.$on ? '#e1dfd6' : '#f6f5f0'};
`
const Etched = styled.hr`
  width:100%;
  margin:0;
  border:0;
  border-top:3px solid #a7a392;
  border-bottom:3px solid #fff;
`
const Group = styled.fieldset`
  display:flex;
  flex-direction:column;
  gap:37px;
  height:250px;
  margin:31px -4px 31px 0;
  padding:22px 0 0 24px;
  border:3px solid #d0cdbb;
  border-radius:14px;
`
const RadioLabel = styled.label`
  display:flex;
  align-items:center;
  gap:8px;
`
const Radio = styled.input`
  appearance:none;
  width:41px;
  height:41px;
  margin:0;
  border:4px solid #285078;
  border-radius:50%;
  background:linear-gradient(135deg,#dcdcd7,#fff);
  &:checked{background:radial-gradient(#22a322 0 8px,#f8f8f5 9px);}
`
const FormGrid = styled.div`
  display:grid;
  grid-template-columns:202px 237px 60px;
  row-gap:21px;
  align-items:center;
  white-space:nowrap;
  & > div{height:72px;}
  & > span{padding-left:9px;}
`
const Spacer = styled.div`height:${p => p.$h}px;`
const Apply = styled.button`
  height:69px;
  margin:25px -2px 0 4px;
  border:3px solid #c9c7ba;
  border-radius:8px;
  background:#f4f3ea;
  color:#a5a394;
`
const Tabs = styled.div`
  flex:none;
  width:78px;
  padding-top:8px;
  border-left:3px solid #cbc7b6;
`
const Tab = styled.button`
  display:flex;
  align-items:center;
  gap:12px;
  height:${p => p.$h}px;
  width:${p => p.$active ? 75 : 66}px;
  padding:14px ${p => p.$active ? 8 : 4}px;
  writing-mode:vertical-rl;
  white-space:nowrap;
  color:${p => p.$active ? '#000' : '#77736a'};
  font-size:${p => p.$active ? 30 : 34}px;
  border:3px solid #cbc7b6;
  border-left:0;
  border-radius:0 14px 14px 0;
  background:${p => p.$active ? 'linear-gradient(90deg,#f3f1e7,#fff)' : face};
`
const CloseBox = styled.span`
  margin-top:16px;
`
const Swatch = styled.span`
  width:44px;
  height:44px;
  background:#7070b0;
  border:2px solid #55557f;
`
const PaletteWrap = styled.aside`
  flex:none;
  width:173px;
  display:flex;
  flex-direction:column;
  border-left:4px solid #faf9f4;
`
const Swatches = styled.div`
  flex:1;
  min-height:0;
  display:grid;
  grid-template-columns:repeat(3,1fr);
  margin-right:5px;
  background:#fff;
`
const ColorCol = styled.div`
  display:grid;
  grid-template-rows:repeat(44,1fr);
  min-height:0;
`
const Chip = styled.button`
  min-height:0;
  overflow:hidden;
  display:flex;
  align-items:center;
  justify-content:center;
  background:${p => p.$arrow ? 'linear-gradient(135deg,#fff,#bbb)' : p.$c};
  border:${p => p.$arrow ? '4px solid #111' : '2px solid #5b5b5b'};
  ${p => p.$arrow && css`margin:4px 5px;`}
`
const CrossSvg = styled.svg`
  width:100%;
  height:100%;
  stroke:#222;
  stroke-width:2;
  display:block;
`
const PaletteFoot = styled.div`
  flex:none;
  height:28px;
  margin-right:35px;
  border-right:4px solid #cbc7b6;
`
const Status = styled.footer`
  flex:none;
  height:143px;
  display:flex;
  align-items:flex-end;
  padding:0 532px 7px 14px;
  border-bottom:3px solid #b9b5a4;
`
const Coords = styled.span`
  width:368px;
  padding-bottom:9px;
  white-space:nowrap;
`
const Hint = styled.span`
  flex:1;
  padding-bottom:9px;
  white-space:nowrap;
`
const FillInfo = styled.div`
  display:grid;
  grid-template-columns:50px 58px;
  gap:5px 14px;
  align-items:center;
`
const Box = styled.span`
  height:58px;
  border:3px solid #777;
  background:${p => p.$dark ? '#24201a' : '#fff'};
`
const Taskbar = styled.div`
  flex:none;
  height:108px;
  display:flex;
  align-items:stretch;
  padding-top:14px;
  color:#fff;
  background:linear-gradient(#2f6fd0,#3585e8 6%,#2a6cda 14%,#4691ea 20%,#2a64dc 30%,#2157d7 40%,#2460e0 85%,#1c46a8);
`
const Start = styled.button`
  width:306px;
  display:flex;
  align-items:center;
  gap:16px;
  padding:0 0 4px 32px;
  border-radius:0 26px 26px 0;
  background:linear-gradient(#6fae6d,#3f9340 16%,#3c9a3c 60%,#3fae40 85%,#2f7f2f);
  box-shadow:inset -8px 0 12px #2b6d2d;
  font:italic bold 56px/64px "Liberation Sans",Arial,sans-serif;
  text-shadow:3px 3px 4px #1d4a1d;
`
const TrayDots = styled.span`
  width:14px;
  margin:12px ${p => p.$m/2+4}px 6px ${p => p.$m}px;
  background:
    radial-gradient(#0c2fa0 0 3px,transparent 4px) 0 0/10px 19px repeat-y,
    radial-gradient(#3f8df2 0 3px,transparent 4px) 6px 10px/10px 19px repeat-y;
`
const Task = styled.button`
  width:508px;
  margin:12px 0 8px;
  display:flex;
  align-items:center;
  gap:14px;
  padding:0 0 0 32px;
  white-space:nowrap;
  border-radius:8px;
  font-size:35px;
  background:${p => p.$on ? '#1b4cb4' : 'linear-gradient(#5c9bf9,#3c80f3 15%,#3a7ff2 85%,#2f6de0)'};
  box-shadow:${p => p.$on ? 'inset 3px 4px 5px #0c2f80' : 'none'};
`
const Lang = styled.div`
  margin-left:auto;
  display:flex;
  align-items:center;
  gap:20px;
  & > ${TrayDots}{align-self:stretch;margin-right:2px;}
`
const LangCode = styled.span`
  padding:6px 2px;
  background:#316ac5;
`
const LangDots = styled.svg`
  width:6px;
  height:50px;
  margin-left:14px;
`
const Tray = styled.div`
  width:354px;
  display:flex;
  align-items:center;
  gap:9px;
  margin-left:40px;
  border-left:3px solid #0b2a78;
  background:linear-gradient(#0a5fd0,#1ab4f3 8%,#138fe8 25%,#0f8fea 60%,#12a0f0 88%,#0b63cf);
  box-shadow:inset 5px 0 3px #1bc4fb;
`
const TrayToggle = styled.button`
  width:60px;
  height:60px;
  margin-left:-32px;
  display:flex;
  align-items:center;
  justify-content:center;
  border:2px solid #cfe2f5;
  border-radius:50%;
  background:radial-gradient(circle at 30% 25%,#a8d8fb,#2f9df0 50%,#1467d8);
`
const Clock = styled.span`
  margin-left:22px;
  font-size:35px;
`
